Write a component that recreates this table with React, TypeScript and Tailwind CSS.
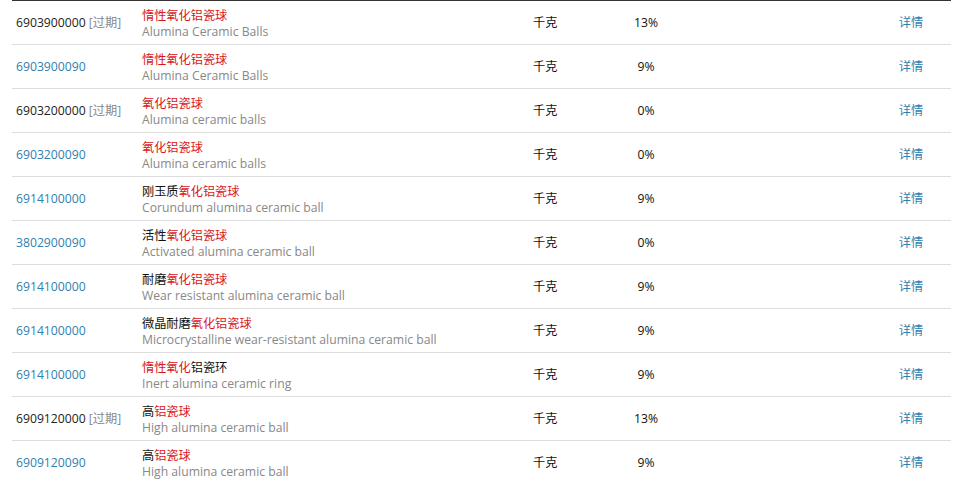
import React from "react";

type Part = { t: string; r?: boolean };
type Row = { code: string; expired?: boolean; zh: Part[]; en: string; rate: string };

const rows: Row[] = [
  { code: "6903900000", expired: true, zh: [{ t: "惰性氧化铝瓷球", r: true }], en: "Alumina Ceramic Balls", rate: "13%" },
  { code: "6903900090", zh: [{ t: "惰性氧化铝瓷球", r: true }], en: "Alumina Ceramic Balls", rate: "9%" },
  { code: "6903200000", expired: true, zh: [{ t: "氧化铝瓷球", r: true }], en: "Alumina ceramic balls", rate: "0%" },
  { code: "6903200090", zh: [{ t: "氧化铝瓷球", r: true }], en: "Alumina ceramic balls", rate: "0%" },
  { code: "6914100000", zh: [{ t: "刚玉质" }, { t: "氧化铝瓷球", r: true }], en: "Corundum alumina ceramic ball", rate: "9%" },
  { code: "3802900090", zh: [{ t: "活性" }, { t: "氧化铝瓷球", r: true }], en: "Activated alumina ceramic ball", rate: "0%" },
  { code: "6914100000", zh: [{ t: "耐磨" }, { t: "氧化铝瓷球", r: true }], en: "Wear resistant alumina ceramic ball", rate: "9%" },
  { code: "6914100000", zh: [{ t: "微晶耐磨" }, { t: "氧化铝瓷球", r: true }], en: "Microcrystalline wear-resistant alumina ceramic ball", rate: "9%" },
  { code: "6914100000", zh: [{ t: "惰性氧化", r: true }, { t: "铝瓷环" }], en: "Inert alumina ceramic ring", rate: "9%" },
  { code: "6909120000", expired: true, zh: [{ t: "高" }, { t: "铝瓷球", r: true }], en: "High alumina ceramic ball", rate: "13%" },
  { code: "6909120090", zh: [{ t: "高" }, { t: "铝瓷球", r: true }], en: "High alumina ceramic ball", rate: "9%" },
];

export default function App() {
  return (
    <div
      className="w-[959px] h-[484px] overflow-hidden bg-white pl-3 text-[12.2px]"
      style={{ fontFamily: '"Open Sans", "Noto Sans CJK SC", sans-serif' }}
    >
      <div className="w-[939px] border-t border-[#333]">
        {rows.map((r, i) => (
          <div key={i} className="flex h-[44px] items-center border-b border-[#ddd] pt-[2px]">
            <div className="w-[130px] pl-1">
              {r.expired ? (
                <span className="text-[#222]">
                  {r.code} <span className="text-[#888]">[过期]</span>
                </span>
              ) : (
                <span className="text-[#2f7fb0]">{r.code}</span>
              )}
            </div>
            <div className="w-[391px] flex flex-col leading-[16px]">
              <div className="text-[#111]">
                {r.zh.map((p, j) => (
                  <span key={j} className={p.r ? "text-[#d9161c]" : ""}>
                    {p.t}
                  </span>
                ))}
              </div>
              <div className="text-[#888]">{r.en}</div>
            </div>
            <div className="w-[80px] text-[#111]">千克</div>
            <div className="w-[66px] text-center text-[#111]">{r.rate}</div>
            <div className="flex-1" />
            <div className="w-[80px] text-center text-[#2f7fb0]">详情</div>
          </div>
        ))}
      </div>
    </div>
  );
}
